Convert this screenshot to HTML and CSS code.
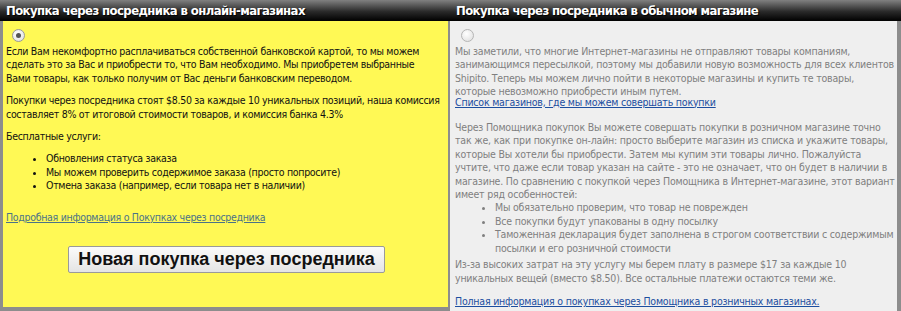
FILE: index.html
```html
<!DOCTYPE html>
<html lang="ru">
<head>
    <meta charset="UTF-8">
    <title>Покупка через посредника</title>
    <link rel="stylesheet" href="styles.css">
</head>
<body>
    <div class="choice">
        <div class="choice-col online">
            <h2 class="choice-head">Покупка через посредника в онлайн-магазинах</h2>
            <div class="choice-body">
                <span class="radio checked"></span>
                <p>Если Вам некомфортно расплачиваться собственной банковской картой, то мы можем<br>
                сделать это за Вас и приобрести то, что Вам необходимо. Мы приобретем выбранные<br>
                Вами товары, как только получим от Вас деньги банковским переводом.</p>
                <p>Покупки через посредника стоят $8.50 за каждые 10 уникальных позиций, наша комиссия<br>
                составляет 8% от итоговой стоимости товаров, и комиссия банка 4.3%</p>
                <p>Бесплатные услуги:</p>
                <ul>
                    <li>Обновления статуса заказа</li>
                    <li>Мы можем проверить содержимое заказа (просто попросите)</li>
                    <li>Отмена заказа (например, если товара нет в наличии)</li>
                </ul>
                <p class="more"><a href="#" class="soft-link">Подробная информация о Покупках через посредника</a></p>
                <div class="btn-row">
                    <button type="button" class="big-btn">Новая покупка через посредника</button>
                </div>
            </div>
        </div>
        <div class="choice-col retail">
            <h2 class="choice-head">Покупка через посредника в обычном магазине</h2>
            <div class="choice-body">
                <span class="radio"></span>
                <p class="intro">Мы заметили, что многие Интернет-магазины не отправляют товары компаниям,<br>
                занимающимся пересылкой, поэтому мы добавили новую возможность для всех клиентов<br>
                Shipito. Теперь мы можем лично пойти в некоторые магазины и купить те товары,<br>
                которые невозможно приобрести иным путем.
                <a href="#" class="shops-link">Список магазинов, где мы можем совершать покупки</a></p>
                <p class="features">Через Помощника покупок Вы можете совершать покупки в розничном магазине точно<br>
                так же, как при покупке он-лайн: просто выберите магазин из списка и укажите товары,<br>
                которые Вы хотели бы приобрести. Затем мы купим эти товары лично. Пожалуйста<br>
                учтите, что даже если товар указан на сайте - это не означает, что он будет в наличии в<br>
                магазине. По сравнению с покупкой через Помощника в Интернет-магазине, этот вариант<br>
                имеет ряд особенностей:</p>
                <ul>
                    <li>Мы обязательно проверим, что товар не поврежден</li>
                    <li>Все покупки будут упакованы в одну посылку</li>
                    <li>Таможенная декларация будет заполнена в строгом соответствии с содержимым<br>
                    посылки и его розничной стоимости</li>
                </ul>
                <p>Из-за высоких затрат на эту услугу мы берем плату в размере $17 за каждые 10<br>
                уникальных вещей (вместо $8.50). Все остальные платежи остаются теми же.</p>
                <p class="more"><a href="#">Полная информация о покупках через Помощника в розничных магазинах.</a></p>
            </div>
        </div>
    </div>
</body>
</html>
```

FILE: styles.css
```css
body {
    margin: 0;
    font-family: "DejaVu Sans Condensed", Tahoma, sans-serif;
    font-size: 10.5px;
    line-height: 13.4px;
    background: #fff;
}

.choice {
    display: flex;
    width: 901px;
    height: 311px;
    overflow: hidden;
}

.choice-col {
    display: flex;
    flex-direction: column;
}

.online {
    width: 450px;
}

.retail {
    width: 451px;
}

.choice-head {
    margin: 0;
    height: 21px;
    padding: 0 6px;
    font-size: 13px;
    letter-spacing: -0.6px;
    line-height: 22px;
    color: #fff;
    text-shadow: 1px 1px 1px #000;
    white-space: nowrap;
    background: linear-gradient(#808080, #2a2a2a 55%, #000);
}

.choice-body {
    flex: 1;
    padding-top: 5px;
    border-bottom: 4px solid #8d8d8d;
}

.online .choice-body {
    background: #fff955;
    color: #111;
    letter-spacing: -0.3px;
    border-left: 3px solid #8d8d8d;
    border-right: 2px solid #8d8d8d;
    padding-left: 3px;
    padding-right: 1px;
}

.retail .choice-body {
    background: #efefef;
    color: #7f7f7f;
    letter-spacing: -0.2px;
    border-right: 4px solid #8d8d8d;
    padding-left: 5px;
    padding-right: 1px;
}

.radio {
    display: block;
    width: 11px;
    height: 11px;
    margin: 3px 0 3px 6px;
    border: 1px solid #9a9a9a;
    border-radius: 50%;
    background: radial-gradient(circle at 40% 35%, #fff, #dcdcdc);
    position: relative;
}

.radio.checked::after {
    content: "";
    position: absolute;
    left: 3px;
    top: 3px;
    width: 5px;
    height: 5px;
    border-radius: 50%;
    background: #555;
}

.retail .radio {
    border-color: #b5b5b5;
}

p {
    margin: 0 0 9px;
}

ul {
    margin: 0 0 9px;
    padding-left: 40px;
}

.online .more {
    margin-top: 18px;
}

.retail .intro {
    margin-bottom: 12px;
}

.shops-link {
    display: block;
    margin-top: -3px;
}

.retail .features {
    margin-bottom: 0;
}

.retail ul {
    margin: 0 -2px 3px 0;
}

.retail .more {
    margin-top: 10px;
}

a {
    color: #1c4ea0;
}

.soft-link {
    color: #4b7387;
}

.btn-row {
    text-align: center;
    margin-top: 22px;
}

.big-btn {
    font-family: "Liberation Sans", Arial, sans-serif;
    font-size: 18px;
    font-weight: bold;
    letter-spacing: 0;
    color: #111;
    height: 27px;
    padding: 0 9px;
    border: 1px solid #9a9a9a;
    border-radius: 2px;
    background: linear-gradient(#fbfbfb, #e4e4e4);
}
```
